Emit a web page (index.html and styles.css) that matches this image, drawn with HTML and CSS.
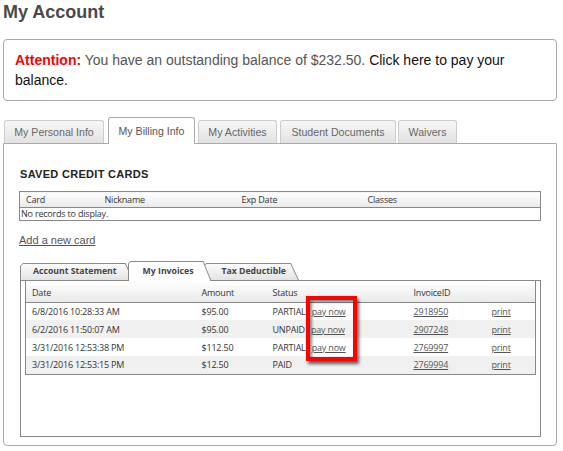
FILE: index.html
```html
<!DOCTYPE html>
<html>
<head>
<meta charset="utf-8">
<title>My Account</title>
<link rel="stylesheet" href="styles.css">
</head>
<body>
<div class="page">
  <h1 class="title">My Account</h1>
  <div class="alert">
    <span class="att">Attention:</span> <span class="msg">You have an outstanding balance of $232.50.</span> <a class="paylink">Click here to pay your balance.</a>
  </div>

  <div class="tabs">
    <div class="tab t1">My Personal Info</div>
    <div class="tab t2 active">My Billing Info</div>
    <div class="tab t3">My Activities</div>
    <div class="tab t4">Student Documents</div>
    <div class="tab t5">Waivers</div>
  </div>

  <div class="panel">
    <h2 class="section">SAVED CREDIT CARDS</h2>
    <table class="grid cards">
      <colgroup><col class="c1"><col class="c2"><col class="c3"><col></colgroup>
      <thead>
        <tr><th>Card</th><th>Nickname</th><th>Exp Date</th><th>Classes</th></tr>
      </thead>
      <tbody>
        <tr><td colspan="4" class="empty">No records to display.</td></tr>
      </tbody>
    </table>
    <div class="addrow"><a class="add">Add a new card</a></div>

    <div class="itabs">
      <div class="itab first"><span>Account Statement</span></div>
      <div class="itab active"><span>My Invoices</span></div>
      <div class="itab last"><span>Tax Deductible</span></div>
    </div>
    <div class="ipanel">
      <div class="invwrap">
        <table class="grid inv">
          <colgroup><col class="d1"><col class="d2"><col class="d3"><col class="d4"><col></colgroup>
          <thead>
            <tr><th>Date</th><th>Amount</th><th>Status</th><th>InvoiceID</th><th></th></tr>
          </thead>
          <tbody>
            <tr><td>6/8/2016 10:28:33 AM</td><td>$95.00</td><td>PARTIAL <a class="lnk pay">pay now</a></td><td><a class="lnk">2918950</a></td><td><a class="lnk">print</a></td></tr>
            <tr class="alt"><td>6/2/2016 11:50:07 AM</td><td>$95.00</td><td>UNPAID <a class="lnk pay">pay now</a></td><td><a class="lnk">2907248</a></td><td><a class="lnk">print</a></td></tr>
            <tr><td>3/31/2016 12:53:38 PM</td><td>$112.50</td><td>PARTIAL <a class="lnk pay">pay now</a></td><td><a class="lnk">2769997</a></td><td><a class="lnk">print</a></td></tr>
            <tr class="alt"><td>3/31/2016 12:53:15 PM</td><td>$12.50</td><td>PAID</td><td><a class="lnk">2769994</a></td><td><a class="lnk">print</a></td></tr>
          </tbody>
        </table>
        <div class="highlight"></div>
      </div>
    </div>
  </div>
</div>
</body>
</html>
```

FILE: styles.css
```css
* { box-sizing: border-box; }
html, body { margin: 0; padding: 0; background: #fff; }
body { font-family: "Liberation Sans", Arial, sans-serif; color: #555; }

.page { padding: 0 6px 0 3px; width: 563px; }

.title {
  margin: 0;
  font-size: 18px;
  line-height: 24px;
  font-weight: bold;
  color: #4a4a4a;
}

.alert {
  margin-top: 15px;
  border: 1px solid #aaa;
  border-radius: 4px;
  padding: 10px 11px;
  font-size: 14px;
  line-height: 20px;
  color: #555;
}
.att { color: #f00; font-weight: bold; }
.paylink { color: #111; text-decoration: none; }

.tabs {
  margin-top: 16px;
  display: flex;
  align-items: flex-end;
  height: 26px;
  padding-left: 1px;
  position: relative;
  z-index: 1;
}
.tab {
  height: 23px;
  line-height: 22px;
  font-size: 10.6px;
  text-align: center;
  color: #666;
  border: 1px solid #ccc;
  border-bottom: none;
  border-radius: 3px 3px 0 0;
  background: linear-gradient(#f7f7f7, #e2e2e2);
  white-space: nowrap;
}
.tab.t1 { width: 100px; }
.tab.t2 { width: 87px; margin-left: 4px; }
.tab.t3 { width: 79px; margin-left: 3px; }
.tab.t4 { width: 116px; margin-left: 3px; }
.tab.t5 { width: 59px; margin-left: 2px; }
.tab.active {
  height: 27px;
  line-height: 27px;
  margin-bottom: -1px;
  background: #fff;
  border-color: #aaa;
  color: #555;
}

.panel {
  border: 1px solid #aaa;
  border-radius: 0 0 4px 4px;
  padding: 23px 15px 8px 15px;
}

.section {
  margin: 0;
  font-size: 11px;
  line-height: 14px;
  font-weight: bold;
  letter-spacing: 0.3px;
  color: #222;
  padding-left: 1px;
}

.grid {
  border-collapse: collapse;
  width: 100%;
  table-layout: fixed;
  font-family: "Open Sans", "Noto Sans", sans-serif;
  font-size: 9px;
  letter-spacing: -0.2px;
  color: #333;
}
.grid th {
  font-weight: normal;
  text-align: left;
  background: linear-gradient(#ffffff, #e9e9e9);
  border-bottom: 1px solid #888;
  padding: 0 0 0 6px;
}
.grid td { padding: 0 0 0 6px; white-space: nowrap; }

.cards { margin-top: 10px; border: 1px solid #888; }
.cards th { height: 16px; }
.cards col.c1 { width: 79px; }
.cards col.c2 { width: 137px; }
.cards col.c3 { width: 126px; }
.cards td.empty { height: 13px; padding-left: 1px; line-height: 12px; }

.addrow { margin-top: 11px; line-height: 14px; height: 14px; }
.add { font-size: 11px; color: #555; text-decoration: underline; }

.itabs {
  margin-top: 15px;
  margin-left: 1px;
  display: flex;
  align-items: flex-end;
  height: 19px;
  font-family: "Open Sans", "Noto Sans", sans-serif;
  font-size: 8.7px;
  font-weight: 700;
  color: #444;
}
.itab {
  position: relative;
  height: 17px;
  background: #8a8a8a;
  padding: 1px 1px 0 1px;
  clip-path: polygon(0 3px, 3px 0, calc(100% - 8px) 0, 100% 100%, 0 100%);
}
.itab span {
  display: block;
  height: 100%;
  line-height: 15px;
  background: linear-gradient(#fbfbfb, #e3e3e3);
  clip-path: polygon(0 2px, 2px 0, calc(100% - 7.6px) 0, 100% 100%, 0 100%);
  white-space: nowrap;
}
.itab.first { z-index: 1; margin-right: -6px; }
.itab.first span { padding: 0 16px 0 12px; }
.itab.active { z-index: 3; height: 20px; margin-bottom: -1px; }
.itab.active span { background: #fff; line-height: 19px; padding: 0 17px 0 14px; }
.itab.last { z-index: 2; margin-left: -8px; }
.itab.last span { padding: 0 12px 0 17px; }

.ipanel {
  margin-left: 1px;
  border: 1px solid #888;
  min-height: 157px;
  padding: 0 4px 0 4px;
}

.invwrap { position: relative; }
.inv { border: 1px solid #888; border-top: none; }
.inv th { height: 21px; padding-top: 2px; }
.inv td { height: 18px; }
.inv tr.alt td { background: #f0f0f0; }
.inv col.d1 { width: 170px; }
.inv col.d2 { width: 71px; }
.inv col.d3 { width: 141px; }
.inv col.d4 { width: 78px; }
.lnk { color: #555; text-decoration: underline; }
.pay { margin-left: 4px; }

.highlight {
  position: absolute;
  left: 281px;
  top: 15px;
  width: 51px;
  height: 65px;
  border: 4px solid #f00;
  box-shadow: 2px 3px 3px rgba(0,0,0,0.6), inset 2px 2px 3px rgba(0,0,0,0.45);
}
```
